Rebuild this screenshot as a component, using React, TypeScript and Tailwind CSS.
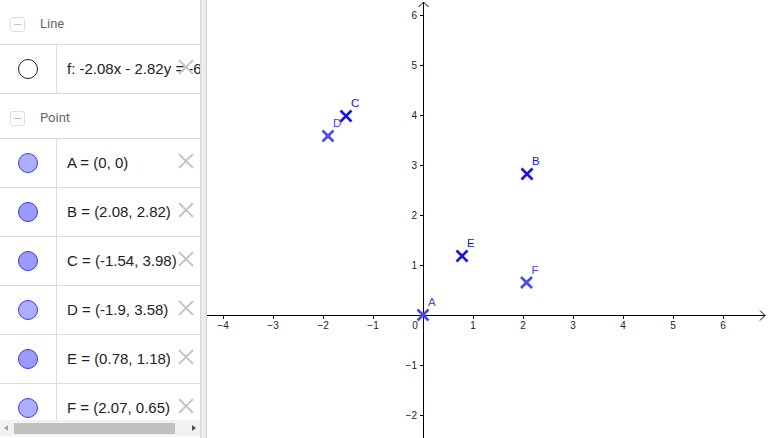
import React from "react";

type Pt = { name: string; x: number; y: number; label: string; dark: boolean };

const points: Pt[] = [
  { name: "A", x: 0, y: 0, label: "(0, 0)", dark: false },
  { name: "B", x: 2.08, y: 2.82, label: "(2.08, 2.82)", dark: true },
  { name: "C", x: -1.54, y: 3.98, label: "(-1.54, 3.98)", dark: true },
  { name: "D", x: -1.9, y: 3.58, label: "(-1.9, 3.58)", dark: false },
  { name: "E", x: 0.78, y: 1.18, label: "(0.78, 1.18)", dark: true },
  { name: "F", x: 2.07, y: 0.65, label: "(2.07, 0.65)", dark: false },
];

const ox = 423;
const oy = 315;
const unit = 50;
const toX = (x: number) => ox + unit * x;
const toY = (y: number) => oy - unit * y;

const font = "'Liberation Sans', Arial, sans-serif";

const DeleteX = () => (
  <svg width="16" height="16" viewBox="0 0 16 16" className="shrink-0">
    <path d="M1 1 L15 15 M15 1 L1 15" stroke="#c6c6c6" strokeWidth="2" fill="none" />
  </svg>
);

const GroupHeader = ({ title }: { title: string }) => (
  <div className="flex items-center h-[45px] pt-[4px] border-b border-[#dcdcdc] bg-white">
    <div className="ml-[10px] w-[15px] h-[15px] rounded-[3px] border border-[#dedede] flex items-center justify-center">
      <div className="w-[7px] h-[1px] bg-[#bdbdbd]" />
    </div>
    <span className="ml-[15px] text-[13px] text-[#666] font-['Roboto',sans-serif]">{title}</span>
  </div>
);

const Row = ({
  marker,
  children,
}: {
  marker: React.ReactNode;
  children: React.ReactNode;
}) => (
  <div className="flex h-[49px] border-b border-[#dcdcdc] bg-white">
    <div className="w-[57px] shrink-0 border-r border-[#dcdcdc] flex items-center justify-center">
      {marker}
    </div>
    <div className="relative flex-1 flex items-center pl-[10px] overflow-hidden">
      <span
        className="text-[15px] text-[#222] whitespace-nowrap"
        style={{ fontFamily: font }}
      >
        {children}
      </span>
      <div className="absolute left-[121px] top-[14px]">
        <DeleteX />
      </div>
    </div>
  </div>
);

const AlgebraPanel = () => (
  <div className="w-[201px] shrink-0 h-full flex flex-col border-r border-[#d6d6d6] bg-white">
    <div className="flex-1 overflow-hidden">
      <GroupHeader title="Line" />
      <Row
        marker={<div className="w-[20px] h-[20px] rounded-full border border-[#222] bg-white" />}
      >
        f: -2.08x - 2.82y = -6.12
      </Row>
      <GroupHeader title="Point" />
      {points.map((p) => (
        <Row
          key={p.name}
          marker={
            <div
              className={`w-[20px] h-[20px] rounded-full border border-[#3838ff] ${
                p.dark ? "bg-[#9a9aff]" : "bg-[#aeaeff]"
              }`}
            />
          }
        >
          {p.name} = {p.label}
        </Row>
      ))}
    </div>
    <div className="h-[16px] shrink-0 bg-[#f1f1f1] flex items-center">
      <svg width="14" height="16" viewBox="0 0 14 16">
        <path d="M4 8 L8 5 L8 11 Z" fill="#a3a3a3" />
      </svg>
      <div className="h-[11px] w-[161px] bg-[#c1c1c1]" />
      <div className="flex-1" />
      <svg width="14" height="16" viewBox="0 0 14 16">
        <path d="M10 8 L6 5 L6 11 Z" fill="#505050" />
      </svg>
    </div>
    <div className="h-[2px] shrink-0 bg-white" />
  </div>
);

const Cross = ({ p }: { p: Pt }) => {
  const cx = toX(p.x);
  const cy = toY(p.y);
  const c = p.dark ? "#1212f2" : "#4646ff";
  const s = 5.5;
  return (
    <g>
      <path
        d={`M${cx - s} ${cy - s} L${cx + s} ${cy + s} M${cx + s} ${cy - s} L${cx - s} ${cy + s}`}
        stroke={c}
        strokeWidth="2.6"
        fill="none"
      />
      <text x={cx + 5} y={cy - 9} fontSize="11.5" fill={c} fontFamily={font}>
        {p.name}
      </text>
    </g>
  );
};

const GraphicsView = () => {
  const xs = [-4, -3, -2, -1, 1, 2, 3, 4, 5, 6];
  const ys = [-2, -1, 1, 2, 3, 4, 5, 6];
  const lab = (n: number) => (n < 0 ? `\u2212${-n}` : `${n}`);
  return (
    <div className="flex-1 h-full bg-white">
      <svg width="561" height="438" viewBox="207 0 561 438" className="block">
        <g stroke="#000" strokeWidth="1" fill="none">
          <line x1="207" y1={oy + 0.5} x2="765" y2={oy + 0.5} />
          <path d={`M760 ${oy - 4.5} L765 ${oy + 0.5} L760 ${oy + 5.5}`} />
          <line x1={ox + 0.5} y1="438" x2={ox + 0.5} y2="2" />
          <path d={`M${ox - 4.5} 7 L${ox + 0.5} 2 L${ox + 5.5} 7`} />
          {xs.map((n) => (
            <line key={n} x1={toX(n) + 0.5} y1={oy} x2={toX(n) + 0.5} y2={oy + 4} />
          ))}
          {ys.map((n) => (
            <line key={n} x1={ox - 3} y1={toY(n) + 0.5} x2={ox} y2={toY(n) + 0.5} />
          ))}
        </g>
        <g fontSize="10" fill="#222" fontFamily={font}>
          {xs.map((n) => (
            <text key={n} x={toX(n)} y={oy + 14} textAnchor="middle">
              {lab(n)}
            </text>
          ))}
          <text x={ox - 8} y={oy + 14} textAnchor="middle">
            0
          </text>
          {ys.map((n) => (
            <text key={n} x={ox - 6} y={toY(n) + 4} textAnchor="end">
              {lab(n)}
            </text>
          ))}
        </g>
        {points.map((p) => (
          <Cross key={p.name} p={p} />
        ))}
      </svg>
    </div>
  );
};

const App = () => {
  return (
    <div className="w-[768px] h-[438px] flex overflow-hidden bg-white">
      <AlgebraPanel />
      <div className="w-[6px] h-full shrink-0 bg-[#ececec] border-r border-[#d4d4d4]" />
      <GraphicsView />
    </div>
  );
};

export default App;
